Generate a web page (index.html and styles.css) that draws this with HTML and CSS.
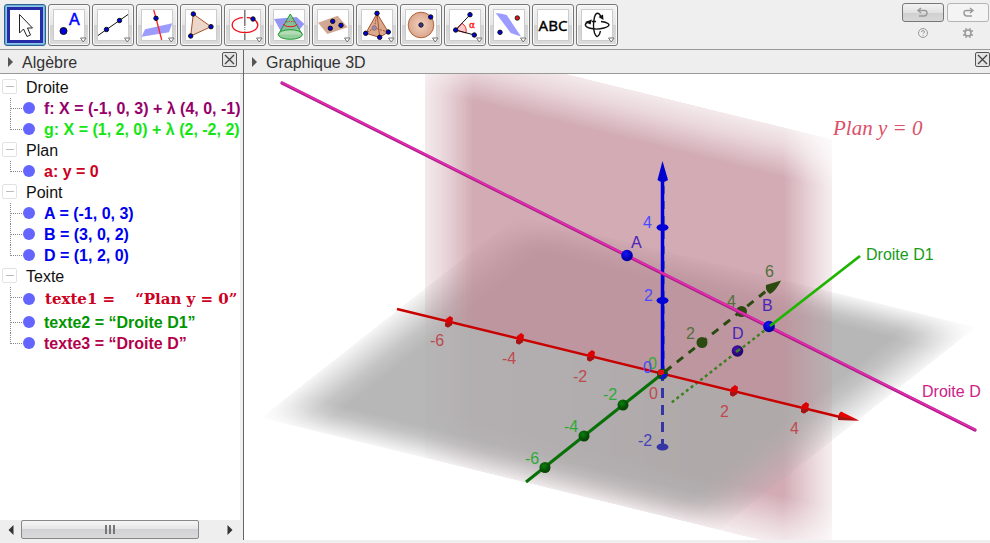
FILE: index.html
```html
<!DOCTYPE html>
<html lang="fr">
<head>
<meta charset="utf-8">
<title>GeoGebra</title>
<link rel="stylesheet" href="styles.css">
</head>
<body>
<header class="toolbar">
  <div class="tools">
    <button class="tool selected" aria-label="Déplacer"><svg viewBox="0 0 30 30"><path d="M9.500 4.500V23L13.500 19L17 26.500L20.500 25L17.500 18H22.500Z" fill="#fff" stroke="#222"/></svg></button>
    <button class="tool" aria-label="Point"><svg viewBox="0 0 32 32"><circle cx="10.500" cy="22" r="3.500" class="pt"/><text x="16" y="16" class="ic-a">A</text><path class="drop" d="M27.500 29H33L30.250 33Z"/></svg></button>
    <button class="tool" aria-label="Droite"><svg viewBox="0 0 32 32"><path d="M1 26.500L31 5.500" stroke="#111"/><circle cx="9.500" cy="20.500" r="2.200" class="pt"/><circle cx="22.500" cy="11.500" r="2.200" class="pt"/><path class="drop" d="M27.500 29H33L30.250 33Z"/></svg></button>
    <button class="tool" aria-label="Droite orthogonale"><svg viewBox="0 0 32 32"><path d="M.7 27.700L4 20.300L31.300 14.300L28 23.300Z" fill="#9c9cff"/><path d="M12.700 1L15 9L20.700 31" stroke="#f22" stroke-width="1.300" fill="none"/><circle cx="15" cy="9.300" r="2.200" class="pt"/><path class="drop" d="M27.500 29H33L30.250 33Z"/></svg></button>
    <button class="tool" aria-label="Polygone"><svg viewBox="0 0 32 32"><path d="M8.300 5L26 17.700L5.700 27Z" fill="#ecd5c9" stroke="#a5532b"/><circle cx="8.300" cy="5" r="2.200" class="pt"/><circle cx="26" cy="17.700" r="2.200" class="pt"/><circle cx="5.700" cy="27" r="2.200" class="pt"/></svg></button>
    <button class="tool" aria-label="Cercle"><svg viewBox="0 0 32 32"><ellipse cx="16" cy="16" rx="12.800" ry="7.700" fill="none" stroke="#f00f1a" stroke-width="1.300"/><path d="M15.800 6V12" stroke="#fff" stroke-width="4"/><path d="M15.800 1V17M15.800 24.500V31" stroke="#777" stroke-width="1.500"/><path d="M15.800 18V23" stroke="#777" stroke-dasharray="1 1"/><circle cx="24" cy="10" r="2.200" class="pt"/><path class="drop" d="M27.500 29H33L30.250 33Z"/></svg></button>
    <button class="tool" aria-label="Intersection"><svg viewBox="0 0 32 32"><path d="M1 10L23.700 8L31.300 15L27 20L7.700 22Z" fill="#9494f2"/><path d="M17.300 5L5.300 25.500A12 4.800 0 0 0 29.300 25.500Z" fill="#85c58c" fill-opacity=".85" stroke="#1b9a2c"/><path d="M5.300 25.500A12 4.800 0 0 1 29.300 25.500" fill="#c9e6c9" fill-opacity=".6" stroke="#1b9a2c"/><path d="M10.500 15A6.800 3 0 0 0 24 15" fill="none" stroke="#e12"/><path d="M12 13.500A6 2 0 0 1 22.500 13.500" fill="none" stroke="#e12" stroke-dasharray="1 1"/></svg></button>
    <button class="tool" aria-label="Plan"><svg viewBox="0 0 32 32"><path d="M1 13.700L20.700 6.700L30.700 18.300L10.300 25Z" fill="#d3a892"/><circle cx="15.700" cy="12.300" r="2.200" class="pt"/><circle cx="13.300" cy="19.300" r="2.200" class="pt"/><circle cx="24" cy="16.300" r="2.200" class="pt"/><path class="drop" d="M27.500 29H33L30.250 33Z"/></svg></button>
    <button class="tool" aria-label="Pyramide"><svg viewBox="0 0 32 32"><path d="M16 4.500L4.700 24.300L18.700 28.300L27.300 23Z" fill="#dca98f" stroke="#a5532b"/><path d="M16 4.500L18.700 28.300" stroke="#a5532b"/><path d="M16 4.500L13.300 19L4.700 24.300M13.300 19L27.300 23" fill="none" stroke="#a5532b" stroke-dasharray="2 1"/><circle cx="13.300" cy="19" r="2.200" fill="#a08aa8" stroke="#8a7088"/><circle cx="16" cy="4.300" r="2.200" class="pt"/><circle cx="4.700" cy="24.300" r="2.200" class="pt"/><circle cx="18.700" cy="28.300" r="2.200" class="pt"/><circle cx="27.300" cy="23" r="2.200" class="pt"/><path class="drop" d="M27.500 29H33L30.250 33Z"/></svg></button>
    <button class="tool" aria-label="Sphère"><svg viewBox="0 0 32 32"><defs><radialGradient id="ball"><stop offset="0" stop-color="#f4d3c2"/><stop offset="1" stop-color="#dba68d"/></radialGradient></defs><circle cx="16" cy="16" r="12.800" fill="url(#ball)" stroke="#b0643e"/><circle cx="16" cy="16" r="2.200" fill="#3a3190" stroke="#222"/><circle cx="25.700" cy="8" r="2.200" class="pt"/><path class="drop" d="M27.500 29H33L30.250 33Z"/></svg></button>
    <button class="tool" aria-label="Angle"><svg viewBox="0 0 32 32"><path d="M6.700 21L13 14.200A9.500 9.500 0 0 1 17 24Z" fill="#fcc9c9" stroke="#f22"/><path d="M21 5.700L6.700 21L25.300 26" fill="none" stroke="#111"/><circle cx="6.700" cy="21" r="2.200" class="pt"/><circle cx="21" cy="5.700" r="2.200" class="pt"/><circle cx="25.300" cy="26" r="2.200" class="pt"/><text x="20" y="19" class="ic-alpha">α</text><path class="drop" d="M27.500 29H33L30.250 33Z"/></svg></button>
    <button class="tool" aria-label="Symétrie"><svg viewBox="0 0 32 32"><path d="M2.700 4Q9 4.500 13.700 6L28 27.500L17.700 24Z" fill="#9c9cff"/><circle cx="24.300" cy="9" r="2.200" fill="#e11" stroke="#222"/><circle cx="7" cy="23.300" r="2.200" class="pt"/><path class="drop" d="M27.500 29H33L30.250 33Z"/></svg></button>
    <button class="tool" aria-label="Texte"><svg viewBox="0 0 32 32"><text x="16" y="22" class="ic-abc">ABC</text></svg></button>
    <button class="tool" aria-label="Tourner la vue"><svg viewBox="0 0 32 32" fill="none" stroke="#111" stroke-width="1.400"><path d="M7 13C3 15 3.500 18 9 19.300Q16 21 23 19Q30 17 27 14.500Q25 13 20 12.500M11 12.500H15"/><path d="M20 8C18 3 15 3 13.500 8Q11.500 17 13.500 24Q16 30.500 18.500 25L19.500 22"/><path d="M4 13L11 10.500L9.500 15.500ZM17.500 8L22 5.500L22.500 11Z" fill="#111" stroke="none"/><path class="drop" d="M27.500 29H33L30.250 33Z"/></svg></button>
  </div>
  <div class="actions">
    <button class="act" aria-label="Annuler"><svg viewBox="0 0 14 12"><path d="M5 1L2 3.500L5 6M2 3.500H8.500Q11 3.500 11 6T8.500 9H3" /></svg></button>
    <button class="act off" aria-label="Rétablir"><svg viewBox="0 0 14 12"><path d="M9 1L12 3.500L9 6M12 3.500H5.500Q3 3.500 3 6T5.500 9H11"/></svg></button>
    <button class="mini" aria-label="Aide"><svg viewBox="0 0 12 12"><circle cx="6" cy="6" r="4.500"/><path d="M4.500 5Q4.500 3.500 6 3.500T7.500 5Q7.500 5.800 6 6.500M6 8V9"/></svg></button>
    <button class="mini" aria-label="Préférences"><svg viewBox="0 0 12 12"><circle cx="6" cy="6" r="3" stroke-width="1.500"/><path d="M4 1V3.500M8 1V3.500M4 8.500V11M8 8.500V11M1 4H3.500M1 8H3.500M8.500 4H11M8.500 8H11" stroke-width="1.300"/></svg></button>
  </div>
</header>
<main class="views">
  <section class="algebra">
    <div class="title"><span class="arrow"></span><h2>Algèbre</h2><button class="close" aria-label="Fermer Algèbre"><svg viewBox="0 0 13 13"><path d="M2 2L11 11M11 2L2 11"/></svg></button></div>
    <div class="tree">
      <div class="group"><button class="toggle" aria-label="Replier Droite"></button>Droite</div>
      <ul>
        <li class="c-f"><i></i>f: X = (-1, 0, 3) + λ (4, 0, -1)</li>
        <li class="c-g"><i></i>g: X = (1, 2, 0) + λ (2, -2, 2)</li>
      </ul>
      <div class="group"><button class="toggle" aria-label="Replier Plan"></button>Plan</div>
      <ul><li class="c-a"><i></i>a: y = 0</li></ul>
      <div class="group"><button class="toggle" aria-label="Replier Point"></button>Point</div>
      <ul class="c-pt">
        <li><i></i>A = (-1, 0, 3)</li>
        <li><i></i>B = (3, 0, 2)</li>
        <li><i></i>D = (1, 2, 0)</li>
      </ul>
      <div class="group"><button class="toggle" aria-label="Replier Texte"></button>Texte</div>
      <ul>
        <li class="c-a latex"><i></i><span>texte1 =</span><span>“Plan y = 0”</span></li>
        <li class="c-t2"><i></i>texte2 = “Droite D1”</li>
        <li class="c-t3"><i></i>texte3 = “Droite D”</li>
      </ul>
    </div>
    <div class="scroll">
      <button aria-label="Défiler à gauche"><svg viewBox="0 0 6 10"><path d="M5.500 0V10L.5 5Z"/></svg></button>
      <div class="track"><div class="thumb"><b></b><b></b><b></b></div></div>
      <button aria-label="Défiler à droite"><svg viewBox="0 0 6 10"><path d="M.5 0V10L5.500 5Z"/></svg></button>
    </div>
  </section>
  <section class="space">
    <div class="title"><span class="arrow"></span><h2>Graphique 3D</h2><button class="close" aria-label="Fermer Graphique 3D"><svg viewBox="0 0 13 13"><path d="M2 2L11 11M11 2L2 11"/></svg></button></div>
    <svg class="scene" viewBox="244 74 746 466" role="img" aria-label="Droites D et D1, plan y = 0">
      <defs>
        <linearGradient id="gu"><stop offset="0" stop-color="#fff" stop-opacity=".12"/><stop offset=".04" stop-color="#fff" stop-opacity=".48"/><stop offset=".08" stop-color="#fff" stop-opacity=".82"/><stop offset=".12" stop-color="#fff"/><stop offset=".88" stop-color="#fff"/><stop offset=".92" stop-color="#fff" stop-opacity=".82"/><stop offset=".96" stop-color="#fff" stop-opacity=".48"/><stop offset="1" stop-color="#fff" stop-opacity=".12"/></linearGradient>
        <linearGradient id="gv" href="#gu" x2="0" y2="1"/>
        <linearGradient id="pu"><stop offset="0" stop-color="#fff" stop-opacity=".25"/><stop offset=".05" stop-color="#fff" stop-opacity=".5"/><stop offset=".12" stop-color="#fff"/><stop offset=".88" stop-color="#fff"/><stop offset=".95" stop-color="#fff" stop-opacity=".5"/><stop offset="1" stop-color="#fff" stop-opacity=".2"/></linearGradient>
        <linearGradient id="pv" href="#pu" x2="0" y2="1"/>
        <mask id="mgu" maskUnits="userSpaceOnUse" x="0" y="0" width="100" height="100"><rect width="100" height="100" fill="url(#gu)"/></mask>
        <mask id="mgv" maskUnits="userSpaceOnUse" x="0" y="0" width="100" height="100"><rect width="100" height="100" fill="url(#gv)"/></mask>
        <mask id="mpu" maskUnits="userSpaceOnUse" x="0" y="0" width="100" height="100"><rect width="100" height="100" fill="url(#pu)"/></mask>
        <mask id="mpv" maskUnits="userSpaceOnUse" x="0" y="0" width="100" height="100"><rect width="100" height="100" fill="url(#pv)"/></mask>
        <clipPath id="above"><path d="M244 0H990V454L244 272Z"/></clipPath>
        <linearGradient id="front" gradientUnits="userSpaceOnUse" x1="500" y1="0" x2="700" y2="0"><stop offset="0" stop-color="#fff" stop-opacity=".6"/><stop offset="1" stop-color="#fff"/></linearGradient>
        <mask id="below" maskUnits="userSpaceOnUse" x="244" y="74" width="746" height="466"><path d="M244 272L990 454V600H244Z" fill="url(#front)"/></mask>
        <g id="wall"><g transform="matrix(4.070 1 0 4.190 425 39)"><g mask="url(#mpu)"><rect width="100" height="100" fill="#c08995" fill-opacity=".71" mask="url(#mpv)"/></g></g></g>
        <radialGradient id="bp" cx=".4" cy=".35"><stop offset="0" stop-color="#1414ff"/><stop offset="1" stop-color="#0000a8"/></radialGradient>
        <radialGradient id="dp" cx=".4" cy=".35"><stop offset="0" stop-color="#4a14c4"/><stop offset="1" stop-color="#25066e"/></radialGradient>
        <radialGradient id="gp" cx=".4" cy=".35"><stop offset="0" stop-color="#0a820a"/><stop offset="1" stop-color="#064806"/></radialGradient>
        <g id="rt"><path d="M-3 -3L1 -6L4 -4L3 3L-1 5.500L-4 4Z" fill="#d00"/><path d="M-4 1L3 1L3 3L-1 5.500L-4 4Z" fill="#a31515"/></g>
      </defs>
      <g mask="url(#below)"><use href="#wall"/></g>
      <g transform="matrix(4.590 1.120 2.580 -2.030 260 418)"><g mask="url(#mgu)"><rect width="100" height="100" fill="#a8a8a8" fill-opacity=".83" mask="url(#mgv)"/></g></g>
      <g clip-path="url(#above)"><use href="#wall"/></g>

      <g fill="none">
        <path d="M662 374L770 288" stroke="#2b4a10" stroke-width="3" stroke-dasharray="8 7" stroke-dashoffset="-4"/>
        <path d="M769 327L671 403" stroke="#3d8020" stroke-width="2.500" stroke-dasharray="3 3"/>
        <path d="M662.500 374V456" stroke="#3535a5" stroke-width="3" stroke-dasharray="10 7" stroke-dashoffset="3"/>
        <path d="M397 309L840 417" stroke="#c80000" stroke-width="2.500"/>
        <path d="M526 482L662 374" stroke="#077007" stroke-width="3"/>
        <path d="M662.500 374V178" stroke="#0000d8" stroke-width="3.500"/>
        <path d="M664.500 374V182" stroke="#5050b0" stroke-dasharray="8 7"/>
      </g>
      <path d="M662.500 161L668 180Q662.500 184 657.500 180Z" fill="#0000d0"/>
      <path d="M859 420.500L841 411.500Q837 415 838.500 420Z" fill="#e60000"/><path d="M859 420.500L838 416V420Z" fill="#a31515"/>
      <path d="M781 280.500L766 285Q765 291 770 294Q776 291 781 280.500Z" fill="#2b4a10"/>
      <g fill="#0000d8"><ellipse cx="662.500" cy="227.500" rx="6" ry="3.500"/><ellipse cx="662.500" cy="300.500" rx="6" ry="3.500"/><ellipse cx="662.500" cy="447" rx="6" ry="3.500" fill="#3535a5"/></g>
      <use href="#rt" x="449" y="322"/><use href="#rt" x="520" y="339"/><use href="#rt" x="591" y="356"/><use href="#rt" x="734" y="391"/><use href="#rt" x="805" y="408"/>
      <g fill="url(#gp)"><circle cx="623" cy="405" r="5.500"/><circle cx="584" cy="436" r="5.500"/><circle cx="545" cy="467.500" r="5.500"/></g>
      <g fill="#2b4a10"><circle cx="702" cy="342.500" r="5.500"/><circle cx="741.500" cy="311.500" r="5.500"/></g>
      <circle cx="662.500" cy="374" r="5.500" fill="#12491c"/><path d="M658 370H664V375H658Z" fill="#e01010"/><path d="M663 374H668L664 379H660Z" fill="#1212d8"/>
      <circle cx="737.500" cy="351" r="5.800" fill="url(#dp)"/>
      <path d="M282 83L975 430" stroke="#a82084" stroke-width="3.200" stroke-linecap="round"/><path d="M282 82.500L975 429.500" stroke="#e62bb4" stroke-width="1.800" stroke-linecap="round"/>
      <circle cx="627" cy="255.500" r="5.800" fill="url(#bp)"/>
      <circle cx="769" cy="326.500" r="5.800" fill="url(#bp)"/>
      <path d="M770 326L860 256" stroke="#1fb400" stroke-width="2.800"/>
      <path d="M736 352L740 349" stroke="#3d8020" stroke-width="2.500"/>

      <g class="num red"><text x="430" y="346">-6</text><text x="502" y="364">-4</text><text x="573" y="382">-2</text><text x="649" y="399">0</text><text x="720" y="417">2</text><text x="790" y="434">4</text></g>
      <g class="num green"><text x="603" y="400">-2</text><text x="564" y="432">-4</text><text x="525" y="464">-6</text><text x="648" y="369">0</text></g>
      <g class="num olive"><text x="686" y="339">2</text><text x="727" y="307">4</text><text x="765" y="277">6</text></g>
      <g class="num blue"><text x="643" y="228">4</text><text x="644" y="301">2</text><text x="643" y="373">0</text></g>
      <text class="num navy" x="638" y="446">-2</text>
      <g class="num violet"><text x="631" y="248">A</text><text x="762" y="311">B</text><text x="732" y="339">D</text></g>
      <text class="num d1" x="866" y="260">Droite D1</text>
      <text class="num dd" x="922" y="397">Droite D</text>
      <text class="formula" x="833" y="135">Plan y = 0</text>
    </svg>
  </section>
</main>
</body>
</html>
```
FILE: styles.css
```css
* { box-sizing: border-box; }
body {
  margin: 0;
  height: 100vh;
  display: flex;
  flex-direction: column;
  background: #efefef;
  color: #111;
  font: 16px/21px "Liberation Sans", Arial, sans-serif;
  overflow: hidden;
}
button { font: inherit; padding: 0; border: 0; background: none; }
svg { display: block; overflow: visible; }

.toolbar {
  display: flex;
  justify-content: space-between;
  padding: 4px 0 3px 4px;
  border-bottom: 1px solid #999;
}
.tools { display: flex; gap: 2px; }
.tool {
  width: 42px;
  height: 42px;
  padding: 4px;
  border: 1px solid #777;
  border-radius: 3px;
  background: linear-gradient(#f4f4f4, #e6e6e6 50%, #d2d2d2 51%, #dcdcdc);
  box-shadow: inset 0 0 0 1px #fafafa;
}
.tool svg { width: 32px; height: 32px; background: #fff; box-shadow: inset 0 0 0 1px #ccc; }
.tool.selected { padding: 2px; border-color: #2c628b; background: #8fc4e6; box-shadow: inset 0 0 0 1px #6db0dc; }
.tool.selected svg { width: 36px; height: 36px; border: 3px solid #262ba8; box-shadow: none; }
.pt { fill: #00d; stroke: #111; }
.drop { fill: #fff; stroke: #777; stroke-width: 1; }
.ic-a { font-size: 16px; fill: #00f; stroke: #00f; stroke-width: 0.5; }
.ic-alpha { font: 9px "DejaVu Sans", sans-serif; fill: #f22; stroke: #f22; stroke-width: 0.4; }
.ic-abc { font: 15px "Noto Sans", sans-serif; text-anchor: middle; stroke: #000; stroke-width: 0.4; }

.actions { display: grid; grid-template-columns: 42px 42px; column-gap: 3px; align-content: start; row-gap: 5px; margin: -1px 1px 0 0; justify-items: center; }
.act {
  width: 42px;
  height: 19px;
  display: grid;
  place-items: center;
  border: 1px solid #777;
  border-radius: 3px;
  background: linear-gradient(#f2f2f2, #e2e2e2 50%, #cfcfcf 51%, #d8d8d8);
}
.act.off { border-color: #b4b4b4; background: #f4f4f4; }
.act svg { width: 14px; height: 12px; }
.actions svg { fill: none; stroke: #999; stroke-width: 1.4; }
.mini svg { width: 12px; height: 12px; stroke-width: 1; }

.views { flex: 1; min-height: 0; display: flex; margin-bottom: 3px; }
.algebra { width: 244px; display: flex; flex-direction: column; border-right: 1px solid #666; }
.space { flex: 1; min-width: 0; display: flex; flex-direction: column; }
.title {
  display: flex;
  align-items: center;
  height: 24px;
  padding: 1px 0 0 8px;
  border-bottom: 1px solid #999;
  background: #eee;
}
.title h2 { flex: 1; margin: 0 0 0 9px; font-size: 16px; font-weight: normal; color: #333; }
.algebra .title { padding-right: 6px; }
.arrow { border: solid transparent; border-width: 5px 0 5px 5px; border-left-color: #555; }
.close { width: 15px; height: 15px; margin-bottom: 6px; border: 1px solid #555; border-radius: 2px; background: #e4e4e4; }
.close svg { width: 13px; height: 13px; stroke: #444; stroke-width: 1.3; }

.tree { flex: 1; min-height: 0; margin-right: 3px; padding-top: 3px; background: #fff; overflow: hidden; white-space: nowrap; }
.group { display: flex; align-items: center; gap: 9px; height: 21px; padding-left: 2px; }
.toggle { width: 15px; height: 15px; margin-bottom: 2px; border: 1px solid #e2e2e2; border-radius: 2px; display: grid; place-items: center; }
.toggle::before { content: ""; width: 8px; height: 1px; background: #bbb; }
ul { margin: 0; padding: 0; list-style: none; }
li { position: relative; display: flex; align-items: center; height: 21px; padding-left: 23px; font-weight: bold; }
li i { flex: none; width: 12px; height: 12px; margin: 0 9px 2px 0; border-radius: 50%; background: #6464ff; }
li::before { content: ""; position: absolute; left: 10px; top: 0; width: 11px; height: 10px; border: dotted #888; border-width: 0 0 1px 1px; }
li:not(:last-child)::after { content: ""; position: absolute; left: 10px; top: 10px; bottom: 0; border-left: 1px dotted #888; }
.c-f { color: #96006a; }
.c-g { color: #14e614; }
.c-a { color: #cc0022; }
.c-pt { color: #0000f0; }
.c-t2 { color: #009600; }
.c-t3 { color: #b4004b; }
.latex { height: 25px; gap: 20px; font: bold 15px/21px "DejaVu Serif", serif; }
.latex i { margin-right: -10px; }

.scroll { display: flex; height: 20px; margin-right: 3px; background: #eee; }
.scroll button { width: 21px; display: grid; place-items: center; }
.scroll button svg { width: 6px; height: 10px; fill: #333; }
.track { flex: 1; }
.thumb {
  width: 90%;
  height: 19px;
  display: flex;
  justify-content: center;
  align-items: center;
  gap: 2px;
  border: 1px solid #888;
  border-radius: 2px;
  background: linear-gradient(#f6f6f6, #e6e6e8 45%, #d2d2d5 50%, #dadadc);
}
.thumb b { width: 2px; height: 9px; background: #777; }

.scene { flex: 1; min-height: 0; width: 100%; background: #fff; overflow: hidden; }
.num { font-size: 16px; }
.red { fill: #bf4a4e; }
.green { fill: #2faa36; }
.olive { fill: #53703a; }
.blue { fill: #4a4aff; }
.navy { fill: #4444b8; }
.violet { fill: #4a24b8; }
.d1 { fill: #189b18; }
.dd { fill: #cc2288; }
.formula { font: italic 21px "Liberation Serif", serif; fill: #dc5068; }
```
